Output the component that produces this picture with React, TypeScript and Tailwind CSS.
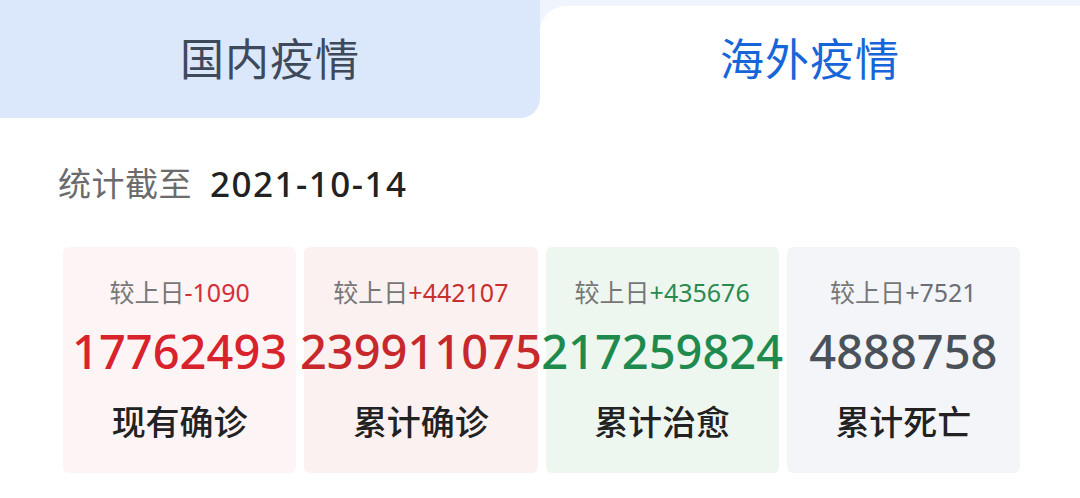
import React from 'react';

const stats = [
  { delta: '-1090', deltaColor: 'text-[#d4303a]', value: '17762493', valueColor: 'text-[#d8222c]', label: '现有确诊', bg: 'bg-[#fdf4f5]' },
  { delta: '+442107', deltaColor: 'text-[#c8302f]', value: '239911075', valueColor: 'text-[#c7282c]', label: '累计确诊', bg: 'bg-[#faf1f0]' },
  { delta: '+435676', deltaColor: 'text-[#2a8a50]', value: '217259824', valueColor: 'text-[#1f8a4d]', label: '累计治愈', bg: 'bg-[#eef6f0]' },
  { delta: '+7521', deltaColor: 'text-[#6b6f75]', value: '4888758', valueColor: 'text-[#4b5159]', label: '累计死亡', bg: 'bg-[#f3f5f9]' },
];

export default function App() {
  return (
    <div className="w-[1080px] h-[498px] bg-white overflow-hidden font-['Noto_Sans','Noto_Sans_CJK_SC',sans-serif]">
      {/* tabs */}
      <div className="flex h-[118px]">
        <div className="w-[540px] h-full bg-[#dbe8fb] rounded-br-[20px] flex items-center justify-center">
          <span className="text-[44px] text-[#3e4a5b] tracking-[1px] leading-none">国内疫情</span>
        </div>
        <div className="flex-1 h-full bg-[#f0f5fd]">
          <div className="h-full mt-[6px] bg-white rounded-tl-[26px] flex items-center justify-center pb-[12px]">
            <span className="text-[44px] text-[#1666d9] tracking-[1px] leading-none">海外疫情</span>
          </div>
        </div>
      </div>

      {/* date */}
      <div className="flex items-center h-[44px] mt-[43px] pl-[58px]">
        <span className="text-[33px] text-[#6b6b6b] tracking-[0.5px] leading-none">统计截至</span>
        <span className="ml-[18px] text-[35px] font-medium text-[#222] tracking-[1.5px] leading-none">2021-10-14</span>
      </div>

      {/* stats cards */}
      <div className="grid grid-cols-4 gap-[8px] mt-[42px] ml-[63px] w-[957px]">
        {stats.map((s) => (
          <div key={s.label} className={`${s.bg} rounded-[6px] h-[226px] flex flex-col items-center pt-[28px]`}>
            <div className="h-[34px] flex items-center text-[25px] leading-none whitespace-nowrap">
              <span className="text-[#777]">较上日</span>
              <span className={s.deltaColor}>{s.delta}</span>
            </div>
            <div className={`mt-[14px] h-[56px] flex items-center text-[47px] font-medium leading-none whitespace-nowrap ${s.valueColor}`}>
              {s.value}
            </div>
            <div className="mt-[21px] h-[44px] flex items-center text-[34px] font-medium text-[#222] leading-none whitespace-nowrap">
              {s.label}
            </div>
          </div>
        ))}
      </div>
    </div>
  );
}
